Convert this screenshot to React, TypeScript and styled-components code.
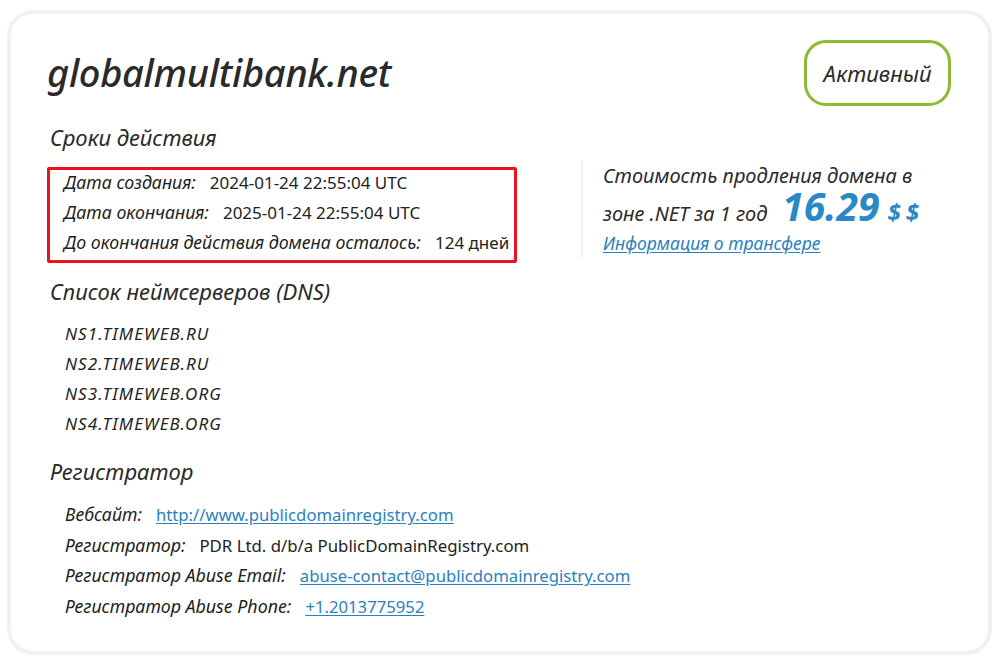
import React from "react";
import styled, { createGlobalStyle } from "styled-components";

const Global = createGlobalStyle`
  html, body { margin: 0; padding: 0; background: #ffffff; }
  body { font-family: "Noto Sans", "Open Sans", sans-serif; color: #222; }
`;

const Card = styled.div`
  margin: 10px 9px 6px 7px;
  border: 4px solid #f1f1f1;
  border-radius: 26px;
  background: #fff;
  padding: 26px 36px 30px 36px;
  height: 645px;
  box-sizing: border-box;
`;

const Header = styled.div`
  display: flex;
  justify-content: space-between;
  align-items: flex-start;
`;

const Title = styled.h1`
  margin: 6px 0 0 0;
  font-size: 38px;
  font-style: italic;
  font-weight: 500;
  color: #2a2a2a;
  letter-spacing: -0.3px;
  line-height: 52px;
`;

const Badge = styled.div`
  width: 147px;
  height: 66px;
  box-sizing: border-box;
  border: 3px solid #8dba32;
  border-radius: 22px;
  display: flex;
  align-items: center;
  justify-content: center;
  font-style: italic;
  font-size: 22px;
  color: #2a2a2a;
  margin-right: 1px;
`;

const SectionTitle = styled.h2<{ $top?: number }>`
  margin: ${(p) => p.$top ?? 0}px 0 0 3px;
  font-size: 22px;
  font-style: italic;
  font-weight: 400;
  color: #2a2a2a;
  line-height: 30px;
`;

const TermsRow = styled.div`
  display: flex;
  align-items: flex-start;
  margin-top: 15px;
`;

const RedBox = styled.div`
  width: 470px;
  height: 96px;
  box-sizing: border-box;
  border: 3px solid #e8131b;
  border-radius: 2px;
  padding: 0 0 0 14px;
  display: flex;
  flex-direction: column;
`;

const Separator = styled.div`
  width: 2px;
  height: 98px;
  background: #f1f1f1;
  margin: -7px 20px 0 64px;
`;

const InfoRow = styled.div<{ $h?: number; $lh?: number }>`
  display: flex;
  align-items: baseline;
  height: ${(p) => p.$h ?? 30}px;
  line-height: ${(p) => p.$lh ?? p.$h ?? 30}px;
  white-space: nowrap;
`;

const Label = styled.span`
  font-style: italic;
  font-size: 17.8px;
  color: #222;
  margin-right: 14px;
`;

const Value = styled.span<{ $size?: number }>`
  font-size: ${(p) => p.$size ?? 16.8}px;
  color: #222;
`;

const LinkValue = styled.a`
  font-size: 16.7px;
  color: #2b81bd;
  text-decoration: underline;
  text-underline-offset: 2px;
`;

const Price = styled.div`
  font-style: italic;
  font-size: 20px;
  color: #2a2a2a;
  margin-top: -6px;
`;

const PriceLine = styled.div<{ $h: number; $lh?: number }>`
  display: flex;
  align-items: baseline;
  height: ${(p) => p.$h}px;
  line-height: ${(p) => p.$lh ?? p.$h}px;
  white-space: nowrap;
`;

const Amount = styled.span`
  display: inline-block;
  font-size: 39px;
  line-height: 30px;
  font-weight: 700;
  color: #2a88c6;
  margin-left: 15px;
`;

const Currency = styled.span`
  font-size: 24px;
  font-weight: 700;
  color: #2a88c6;
  margin-left: 8px;
  letter-spacing: 5px;
`;

const TransferLink = styled.a`
  display: block;
  font-size: 17.6px;
  font-style: italic;
  color: #2b81bd;
  text-decoration: underline;
  text-underline-offset: 2px;
  line-height: 24px;
`;

const List = styled.div<{ $top: number }>`
  margin: ${(p) => p.$top}px 0 0 18px;
`;

const NsItem = styled.div`
  font-size: 17px;
  font-style: italic;
  letter-spacing: 1.1px;
  color: #222;
  height: 30px;
  line-height: 30px;
`;

export default function App() {
  return (
    <>
      <Global />
      <Card>
        <Header>
          <Title>globalmultibank.net</Title>
          <Badge>Активный</Badge>
        </Header>
        <SectionTitle $top={16}>Сроки действия</SectionTitle>
        <TermsRow>
          <RedBox>
            <InfoRow $lh={24}>
              <Label>Дата создания:</Label>
              <Value $size={17}>2024-01-24 22:55:04 UTC</Value>
            </InfoRow>
            <InfoRow $lh={24}>
              <Label>Дата окончания:</Label>
              <Value $size={17}>2025-01-24 22:55:04 UTC</Value>
            </InfoRow>
            <InfoRow $lh={24}>
              <Label>До окончания действия домена осталось:</Label>
              <Value $size={17}>124 дней</Value>
            </InfoRow>
          </RedBox>
          <Separator />
          <Price>
            <PriceLine $h={30}>Стоимость продления домена в</PriceLine>
            <PriceLine $h={40} $lh={32}>
              зоне .NET за 1 год
              <Amount>16.29</Amount>
              <Currency>$$</Currency>
            </PriceLine>
            <TransferLink href="#">Информация о трансфере</TransferLink>
          </Price>
        </TermsRow>
        <SectionTitle $top={13}>Список неймсерверов (DNS)</SectionTitle>
        <List $top={13}>
          <NsItem>NS1.TIMEWEB.RU</NsItem>
          <NsItem>NS2.TIMEWEB.RU</NsItem>
          <NsItem>NS3.TIMEWEB.ORG</NsItem>
          <NsItem>NS4.TIMEWEB.ORG</NsItem>
        </List>
        <SectionTitle $top={17}>Регистратор</SectionTitle>
        <List $top={13}>
          <InfoRow $h={30.7}>
            <Label>Вебсайт:</Label>
            <LinkValue href="#">http://www.publicdomainregistry.com</LinkValue>
          </InfoRow>
          <InfoRow $h={30.7}>
            <Label>Регистратор:</Label>
            <Value>PDR Ltd. d/b/a PublicDomainRegistry.com</Value>
          </InfoRow>
          <InfoRow $h={30.7}>
            <Label>Регистратор Abuse Email:</Label>
            <LinkValue href="#">abuse-contact@publicdomainregistry.com</LinkValue>
          </InfoRow>
          <InfoRow $h={30.7}>
            <Label>Регистратор Abuse Phone:</Label>
            <LinkValue href="#">+1.2013775952</LinkValue>
          </InfoRow>
        </List>
      </Card>
    </>
  );
}
